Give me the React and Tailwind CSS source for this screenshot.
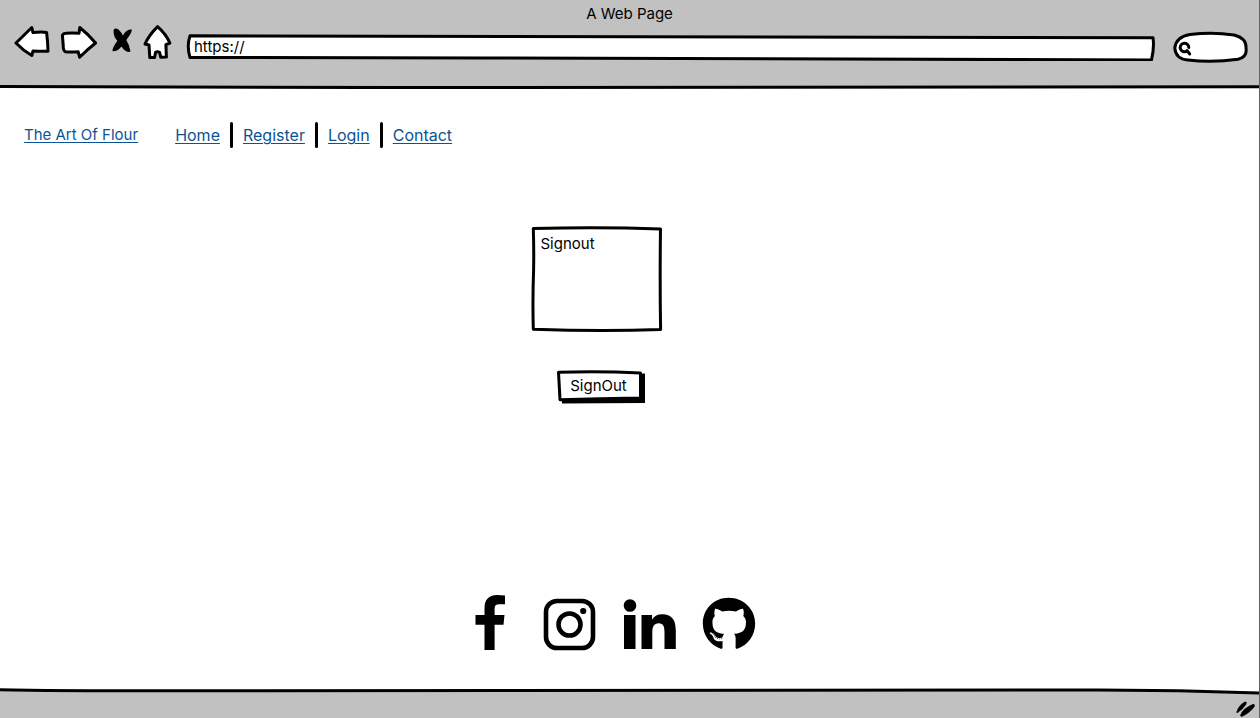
import React from "react";
import { FaGithub } from "react-icons/fa";

const outline = {
  fill: "#fff",
  stroke: "#000",
  strokeWidth: 3,
  strokeLinejoin: "round",
  strokeLinecap: "round",
};

function Toolbar() {
  return (
    <div className="flex items-center gap-[10px]">
      <button type="button" aria-label="Back">
        <svg width="36" height="36" viewBox="14 24 36 36" className="block">
          <path d="M16 43 L31.8 27.5 L33 32.6 Q41 31.4 46.6 32.4 Q47.8 42 48 51.2 Q40 51.3 33 51 L31.8 55.5 Q23 50.5 16 43Z" {...outline} />
        </svg>
      </button>
      <button type="button" aria-label="Forward">
        <svg width="38" height="36" viewBox="60 24 38 36" className="block">
          <path d="M62.4 35.500 Q63 33.500 66 33.300 Q72 32.600 79 33.300 L79.800 27.500 Q88 34 95.600 43 Q88 49 79.600 57.200 L78.200 51.800 Q71 52.200 65.500 51.800 Q63 50.600 63.200 45Z" {...outline} />
        </svg>
      </button>
      <button type="button" aria-label="Stop">
        <svg width="25" height="36" viewBox="108 24 25 36" className="block">
          <path d="M113.600 30 Q115 27.500 118.500 29.500 Q121.500 32.500 123 35.500 Q126 29.500 131.500 29.300 Q133 31.500 126.300 40 Q129.500 45 130.500 51.500 Q126 53.500 121.500 46.500 Q117 51.800 112.800 51.300 Q111.500 48.500 117.300 41 Q113 36 113.600 30Z" />
        </svg>
      </button>
      <button type="button" aria-label="Home">
        <svg width="30" height="36" viewBox="143 24 30 36" className="block">
          <path d="M157.600 26.600 Q166 34 169.900 43 L165.900 44.600 L166.400 57 L160.800 57.300 L159.600 52.300 Q157.300 51 155.600 52.300 L154.600 57.500 L149.800 57.600 L149 45 L145 44 Q149 35 157.600 26.600Z" {...outline} />
        </svg>
      </button>
    </div>
  );
}

function BrowserHeader() {
  return (
    <header className="relative h-[89px] bg-[#c1c1c1]">
      <svg className="absolute inset-x-0 bottom-0 h-1 w-full" viewBox="0 0 1260 4" preserveAspectRatio="none" aria-hidden="true">
        <path d="M0 1.500 Q130 2.500 400 2.600 T1260 1.800 V4 H0Z" fill="#fff" />
        <path d="M0 1.500 Q130 2.500 400 2.600 T1260 1.800" fill="none" stroke="#000" strokeWidth="3" />
      </svg>
      <h1 className="h-6 text-center leading-7">A Web Page</h1>
      <div className="flex h-9 items-start pr-[10px] pl-[14px]">
        <Toolbar />
        <div className="relative mt-[9px] ml-[13px] h-7 flex-1">
          <svg className="absolute inset-0 h-full w-full" viewBox="0 0 968 28" preserveAspectRatio="none" aria-hidden="true">
            <path d="M4 2.800 Q500 2.500 966 4.800 Q967.500 14 964.500 27 Q600 27 300 25 Q120 24.800 4 24.500 Q0.500 13 4 2.800Z" {...outline} />
          </svg>
          <input
            type="text"
            aria-label="Address"
            defaultValue="https://"
            className="relative h-full w-full bg-transparent px-2 pb-[2px] outline-none"
          />
        </div>
        <div className="relative mt-[7px] ml-[17px] h-8 w-[77px]">
          <svg className="absolute inset-0 h-full w-full" viewBox="1172 31 77 32" aria-hidden="true">
            <path d="M1174.800 48 Q1176 37 1190 34.600 Q1212 31.800 1234 35 Q1246.500 38 1246 48 Q1247.500 57 1238 59.300 Q1212 62.800 1188 60 Q1175.500 59 1174.800 48Z" {...outline} />
            <path d="M1188.800 47.500 a4.300 4.300 0 1 0 -1.600 3.400 M1187 50.500 L1189.700 54" {...outline} />
          </svg>
          <input type="search" aria-label="Search" className="relative h-full w-full bg-transparent pr-3 pl-6 outline-none" />
        </div>
      </div>
    </header>
  );
}

function Divider() {
  return <span className="h-[26px] w-[3px] rounded-full bg-black" aria-hidden="true" />;
}

function NavLink({ children }) {
  return (
    <a href="#" className="text-[#0b5394] underline decoration-1 underline-offset-2">
      {children}
    </a>
  );
}

function SiteNav() {
  return (
    <nav className="flex items-center gap-[37px]">
      <NavLink>The Art Of Flour</NavLink>
      <div className="flex items-center gap-[10px] text-[16px]">
        <NavLink>Home</NavLink>
        <Divider />
        <NavLink>Register</NavLink>
        <Divider />
        <NavLink>Login</NavLink>
        <Divider />
        <NavLink>Contact</NavLink>
      </div>
    </nav>
  );
}

function SignOutForm() {
  return (
    <form className="mt-[78px] flex flex-col items-center pr-[66px]" onSubmit={(e) => e.preventDefault()}>
      <div className="relative h-[106px] w-[132px]">
        <svg className="absolute inset-0 h-full w-full" viewBox="531 226 132 106" aria-hidden="true">
          <path d="M533.300 228.500 Q600 226.600 660.500 229 Q659.800 280 660.600 329.600 Q600 331.500 533.300 329.300 Q532.500 300 533.600 270 Q534 250 533.300 228.500Z" {...outline} />
        </svg>
        <textarea
          aria-label="Signout"
          defaultValue="Signout"
          className="relative block h-full w-full resize-none bg-transparent px-[10px] py-2 leading-5 outline-none"
        />
      </div>
      <button type="submit" className="relative mt-[38px] ml-2 h-[34px] w-[90px] pr-1 pb-[2px]">
        <svg className="absolute inset-0 h-full w-full" viewBox="556 370 90 34" aria-hidden="true">
          <path d="M561 375 L645 373.500 L645 403 L562 403.500Z" />
          <path d="M558.500 372.300 Q600 371 640.500 373 L640.500 398 Q600 398.500 560 399.700Z" {...outline} />
        </svg>
        <span className="relative">SignOut</span>
      </button>
    </form>
  );
}

function SocialLinks() {
  return (
    <div className="mt-auto mb-[37px] flex items-end justify-center pr-[30px]">
      <a href="#" aria-label="Facebook">
        <svg width="32" height="56" viewBox="474 595 32 56" className="block">
          <path d="M505 595.500 Q501 595 497 595 Q484.500 595.500 484.500 608 V615 H475.500 V624.700 H484.500 V650 H494.600 V624.700 H503.500 L504.500 615 H494.600 V608.500 Q494.600 604.300 499 604.300 H505Z" />
        </svg>
      </a>
      <a href="#" aria-label="Instagram" className="ml-9">
        <svg width="54" height="54" viewBox="542 597 54 54" className="block">
          <rect x="546" y="601" width="47" height="47" rx="11" fill="none" stroke="#000" strokeWidth="4.600" />
          <circle cx="569.500" cy="624.500" r="11" fill="none" stroke="#000" strokeWidth="4.600" />
          <circle cx="583.200" cy="611" r="3.100" />
        </svg>
      </a>
      <a href="#" aria-label="LinkedIn" className="ml-[26px]">
        <svg width="56" height="54" viewBox="622 597 56 54" className="block">
          <circle cx="630" cy="605.500" r="6.300" />
          <path d="M624 615 H635.500 V649 H624Z M641.500 615 H652 V619.500 Q655.500 614.200 662 614.200 C673 614.200 675.800 621 675.800 631 V649 H664.500 V632.500 C664.500 627 663.500 623.300 658.700 623.300 S652.300 627 652.300 632.500 V649 H641.500Z" />
        </svg>
      </a>
      <a href="#" aria-label="GitHub" className="ml-6">
        <FaGithub className="block size-[54px]" />
      </a>
    </div>
  );
}

function BrowserFooter() {
  return (
    <footer className="flex h-[30px] flex-col items-end justify-between bg-[#c1c1c1]">
      <svg className="block h-[7px] w-full" viewBox="0 0 1260 7" preserveAspectRatio="none" aria-hidden="true">
        <path d="M0 0 H1260 V5 Q1180 2 1100 2 Q600 2.500 200 2.800 Q60 3 0 1.800Z" fill="#fff" />
        <path d="M0 1.800 Q60 3 200 2.800 Q600 2.500 1100 2 Q1180 2 1260 5" fill="none" stroke="#000" strokeWidth="3" />
      </svg>
      <svg width="22" height="18" viewBox="1236 700 22 18" className="mr-[2px] block" aria-hidden="true">
        <path d="M1237.500 712 Q1239 706 1245.500 701.800 Q1248.500 701 1247.500 704 Q1244 709.500 1238.500 713 Q1237 713 1237.500 712Z M1241.300 715 Q1244 708 1254 704 Q1257 704 1255 707.500 Q1250 713.500 1243 716.700 Q1240.800 716.800 1241.300 715Z" />
      </svg>
    </footer>
  );
}

export default function App() {
  return (
    <div className="flex min-h-screen flex-col border-r border-[#5f5f5f] bg-white font-['Inter',sans-serif] text-[15px] text-black">
      <BrowserHeader />
      <main className="flex flex-1 flex-col">
        <div className="px-6 pt-[33px]">
          <SiteNav />
        </div>
        <SignOutForm />
        <SocialLinks />
      </main>
      <BrowserFooter />
    </div>
  );
}
